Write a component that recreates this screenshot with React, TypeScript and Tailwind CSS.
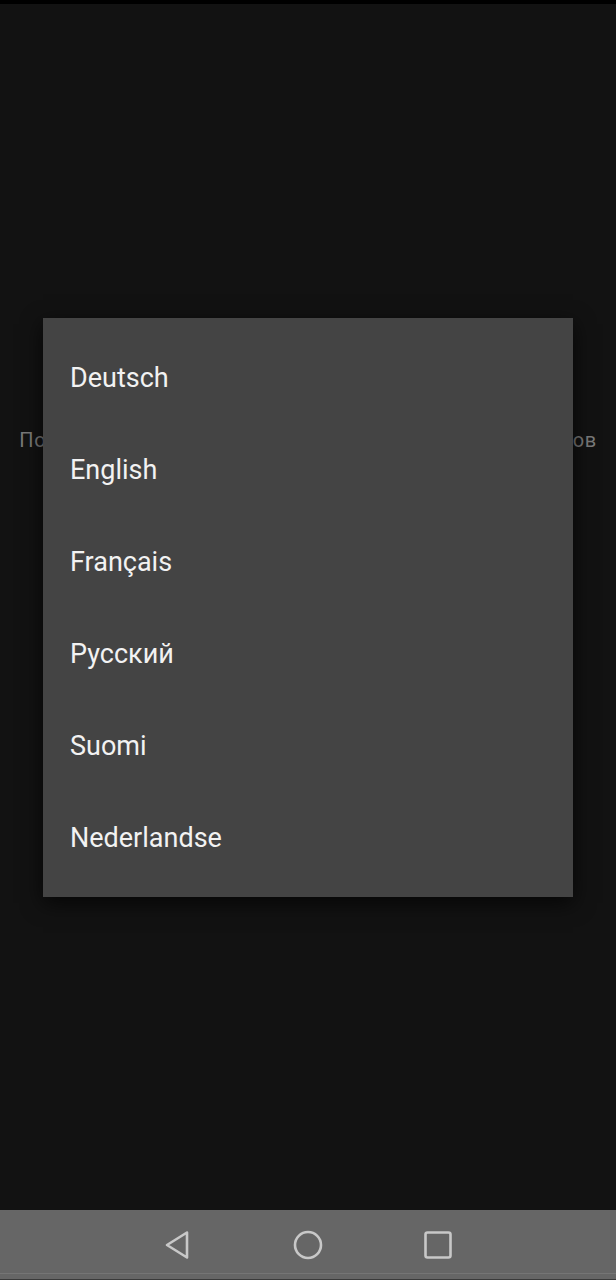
const languages = ['Deutsch', 'English', 'Français', 'Русский', 'Suomi', 'Nederlandse'];

function NavBar() {
  return (
    <div className="relative flex h-[70px] items-center bg-[#666666]">
      <div className="flex w-full items-center">
        <div className="flex w-[176px] justify-end">
          <svg width="26" height="32" viewBox="0 0 26 32" className="mr-[-14px]">
            <path
              d="M23 3.5 L3 16 L23 28.5 Z"
              fill="none"
              stroke="#c8c8c8"
              strokeWidth="2.6"
              strokeLinejoin="round"
            />
          </svg>
        </div>
        <div className="flex flex-1 justify-center">
          <svg width="32" height="32" viewBox="0 0 32 32">
            <circle cx="16" cy="16" r="13" fill="none" stroke="#c8c8c8" strokeWidth="2.6" />
          </svg>
        </div>
        <div className="flex w-[176px] justify-start">
          <svg width="28" height="28" viewBox="0 0 28 28" className="ml-[-16px]">
            <rect x="1.5" y="1.5" width="25" height="25" rx="2" fill="none" stroke="#c8c8c8" strokeWidth="2.6" />
          </svg>
        </div>
      </div>
      <div className="absolute bottom-[6px] left-0 h-px w-full bg-[#757575]" />
      <div className="absolute bottom-0 left-0 h-[1px] w-full bg-[#3a3a3a]" />
    </div>
  );
}

export default function App() {
  return (
    <div
      className="flex h-[1280px] w-[616px] flex-col overflow-hidden bg-[#121212]"
      style={{ fontFamily: 'Roboto, "Noto Sans", sans-serif' }}
    >
      <div className="h-[4px] bg-black" />
      <div className="relative flex-1">
        <div className="pt-[422px] text-center">
          <p className="whitespace-nowrap text-[20px] leading-[28px] tracking-[0.6px] text-[#7a7a7a]">
            Пожалуйста, выберите язык из списка доступных языков
          </p>
        </div>

        <div className="absolute left-[43px] top-[314px] w-[530px] bg-[#444444] pt-[14px] pb-[13px] shadow-[0_6px_20px_rgba(0,0,0,0.7)]">
          {languages.map((lang) => (
            <div key={lang} className="flex h-[92px] items-center pl-[27px]">
              <span className="text-[27px] leading-none text-[#f2f2f2]">{lang}</span>
            </div>
          ))}
        </div>
      </div>
      <NavBar />
    </div>
  );
}
